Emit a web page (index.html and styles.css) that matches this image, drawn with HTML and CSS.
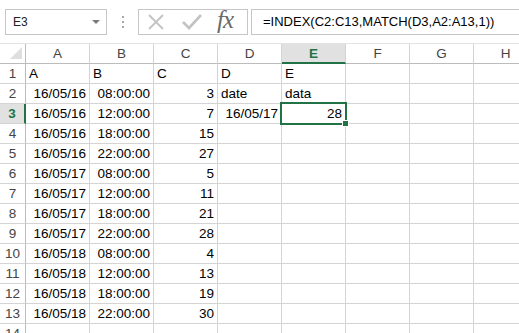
FILE: index.html
```html
<!DOCTYPE html>
<html lang="en">
<head>
    <meta charset="UTF-8">
    <title>Book1 - Excel</title>
    <link rel="stylesheet" href="styles.css">
</head>
<body>
    <div class="toolbar">
        <div class="name-box">
            <span>E3</span>
            <div class="name-arrow"></div>
        </div>
        <svg class="grip" width="3" height="12" viewBox="0 0 3 12">
            <rect x="0" y="0" width="2" height="2" fill="#a6a6a6"/>
            <rect x="0" y="5" width="2" height="2" fill="#a6a6a6"/>
            <rect x="0" y="10" width="2" height="2" fill="#a6a6a6"/>
        </svg>
        <div class="fx-buttons">
            <svg class="btn-cancel" width="18" height="16" viewBox="0 0 18 16">
                <path d="M2 1 L16 15 M16 1 L2 15" stroke="#c3c3c3" stroke-width="1.8" fill="none"/>
            </svg>
            <svg class="btn-enter" width="20" height="17" viewBox="0 0 20 17">
                <path d="M1 9 L7 15 L19 2" stroke="#c3c3c3" stroke-width="2.6" fill="none"/>
            </svg>
            <span class="btn-fx">fx</span>
        </div>
        <div class="formula">=INDEX(C2:C13,MATCH(D3,A2:A13,1))</div>
    </div>

    <div class="sheet">
        <div class="row head">
            <div class="corner"></div>
            <div class="col-head">A</div>
            <div class="col-head">B</div>
            <div class="col-head">C</div>
            <div class="col-head">D</div>
            <div class="col-head active">E</div>
            <div class="col-head">F</div>
            <div class="col-head">G</div>
            <div class="col-head">H</div>
        </div>
        <div class="row">
            <div class="row-head">1</div>
            <div class="cell">A</div><div class="cell">B</div><div class="cell">C</div><div class="cell">D</div><div class="cell">E</div>
            <div class="cell"></div><div class="cell"></div><div class="cell"></div>
        </div>
        <div class="row">
            <div class="row-head">2</div>
            <div class="cell num">16/05/16</div><div class="cell num">08:00:00</div><div class="cell num">3</div><div class="cell">date</div><div class="cell">data</div>
            <div class="cell"></div><div class="cell"></div><div class="cell"></div>
        </div>
        <div class="row">
            <div class="row-head active">3</div>
            <div class="cell num">16/05/16</div><div class="cell num">12:00:00</div><div class="cell num">7</div><div class="cell num">16/05/17</div><div class="cell num selected">28</div>
            <div class="cell"></div><div class="cell"></div><div class="cell"></div>
        </div>
        <div class="row">
            <div class="row-head">4</div>
            <div class="cell num">16/05/16</div><div class="cell num">18:00:00</div><div class="cell num">15</div><div class="cell"></div><div class="cell"></div>
            <div class="cell"></div><div class="cell"></div><div class="cell"></div>
        </div>
        <div class="row">
            <div class="row-head">5</div>
            <div class="cell num">16/05/16</div><div class="cell num">22:00:00</div><div class="cell num">27</div><div class="cell"></div><div class="cell"></div>
            <div class="cell"></div><div class="cell"></div><div class="cell"></div>
        </div>
        <div class="row">
            <div class="row-head">6</div>
            <div class="cell num">16/05/17</div><div class="cell num">08:00:00</div><div class="cell num">5</div><div class="cell"></div><div class="cell"></div>
            <div class="cell"></div><div class="cell"></div><div class="cell"></div>
        </div>
        <div class="row">
            <div class="row-head">7</div>
            <div class="cell num">16/05/17</div><div class="cell num">12:00:00</div><div class="cell num">11</div><div class="cell"></div><div class="cell"></div>
            <div class="cell"></div><div class="cell"></div><div class="cell"></div>
        </div>
        <div class="row">
            <div class="row-head">8</div>
            <div class="cell num">16/05/17</div><div class="cell num">18:00:00</div><div class="cell num">21</div><div class="cell"></div><div class="cell"></div>
            <div class="cell"></div><div class="cell"></div><div class="cell"></div>
        </div>
        <div class="row">
            <div class="row-head">9</div>
            <div class="cell num">16/05/17</div><div class="cell num">22:00:00</div><div class="cell num">28</div><div class="cell"></div><div class="cell"></div>
            <div class="cell"></div><div class="cell"></div><div class="cell"></div>
        </div>
        <div class="row">
            <div class="row-head">10</div>
            <div class="cell num">16/05/18</div><div class="cell num">08:00:00</div><div class="cell num">4</div><div class="cell"></div><div class="cell"></div>
            <div class="cell"></div><div class="cell"></div><div class="cell"></div>
        </div>
        <div class="row">
            <div class="row-head">11</div>
            <div class="cell num">16/05/18</div><div class="cell num">12:00:00</div><div class="cell num">13</div><div class="cell"></div><div class="cell"></div>
            <div class="cell"></div><div class="cell"></div><div class="cell"></div>
        </div>
        <div class="row">
            <div class="row-head">12</div>
            <div class="cell num">16/05/18</div><div class="cell num">18:00:00</div><div class="cell num">19</div><div class="cell"></div><div class="cell"></div>
            <div class="cell"></div><div class="cell"></div><div class="cell"></div>
        </div>
        <div class="row">
            <div class="row-head">13</div>
            <div class="cell num">16/05/18</div><div class="cell num">22:00:00</div><div class="cell num">30</div><div class="cell"></div><div class="cell"></div>
            <div class="cell"></div><div class="cell"></div><div class="cell"></div>
        </div>
        <div class="row">
            <div class="row-head">14</div>
            <div class="cell"></div><div class="cell"></div><div class="cell"></div><div class="cell"></div><div class="cell"></div>
            <div class="cell"></div><div class="cell"></div><div class="cell"></div>
        </div>
    </div>
</body>
</html>
```

FILE: styles.css
```css
body {
    margin: 0;
    padding: 0;
    font-family: "Liberation Sans", Arial, sans-serif;
    background-color: #fff;
    color: #000;
    overflow: hidden;
}
.toolbar {
    display: flex;
    align-items: center;
    height: 43px;
    padding-left: 5px;
    border-bottom: 1px solid #e3e3e3;
}
.name-box {
    width: 102px;
    height: 26px;
    box-sizing: border-box;
    border: 1px solid #c6c6c6;
    display: flex;
    align-items: center;
    justify-content: space-between;
    padding: 0 6px 0 7px;
    font-size: 12px;
    color: #222;
}
.name-arrow {
    width: 0;
    height: 0;
    border-left: 4px solid transparent;
    border-right: 4px solid transparent;
    border-top: 4px solid #7a7a7a;
    margin-top: 1px;
}
.grip {
    margin-left: 15px;
}
.fx-buttons {
    margin-left: 13px;
    width: 110px;
    height: 26px;
    box-sizing: border-box;
    border: 1px solid #c6c6c6;
    display: flex;
    align-items: center;
}
.btn-cancel {
    margin-left: 8px;
}
.btn-enter {
    margin-left: 17px;
}
.btn-fx {
    margin-left: 15px;
    font-family: "Liberation Serif", "DejaVu Serif", serif;
    font-style: italic;
    font-size: 25px;
    color: #6a6a6a;
    letter-spacing: -1px;
    margin-top: -4px;
}
.formula {
    flex: 1;
    margin-left: 3px;
    margin-right: -4px;
    height: 26px;
    box-sizing: border-box;
    border: 1px solid #c6c6c6;
    padding-left: 11px;
    font-size: 13px;
    line-height: 23px;
    white-space: nowrap;
}
.sheet {
    font-size: 13.5px;
}
.row {
    display: grid;
    grid-template-columns: 26px repeat(8, 64px);
}
.row > div {
    height: 20px;
    box-sizing: border-box;
    padding: 1px 3px 0 3px;
    line-height: 18px;
    white-space: nowrap;
    border-right: 1px solid #d4d4d4;
    border-bottom: 1px solid #d4d4d4;
}
.corner {
    position: relative;
    border-right-color: #bcbcbc !important;
    border-bottom-color: #bcbcbc !important;
}
.corner::after {
    content: "";
    position: absolute;
    right: 3px;
    bottom: 4px;
    width: 0;
    height: 0;
    border-left: 12px solid transparent;
    border-bottom: 12px solid #dfdfdf;
}
.col-head {
    text-align: center;
    color: #444;
    border-bottom-color: #bcbcbc !important;
}
.col-head.active {
    background-color: #e1e1e1;
    color: #217346;
    font-weight: bold;
    border-bottom: 2px solid #217346 !important;
}
.row-head {
    text-align: center;
    color: #444;
    padding: 1px 0 0 0 !important;
    border-right-color: #bcbcbc !important;
}
.row-head.active {
    background-color: #e1e1e1;
    color: #217346;
    font-weight: bold;
    border-right: 2px solid #217346 !important;
}
.num {
    text-align: right;
}
.selected {
    position: relative;
}
.selected::after {
    content: "";
    position: absolute;
    left: -2px;
    top: -2px;
    right: -2px;
    bottom: -2px;
    border: 2px solid #217346;
}
.selected::before {
    content: "";
    position: absolute;
    right: -4px;
    bottom: -4px;
    width: 5px;
    height: 5px;
    background-color: #217346;
    border: 1px solid #fff;
    z-index: 1;
}
```
